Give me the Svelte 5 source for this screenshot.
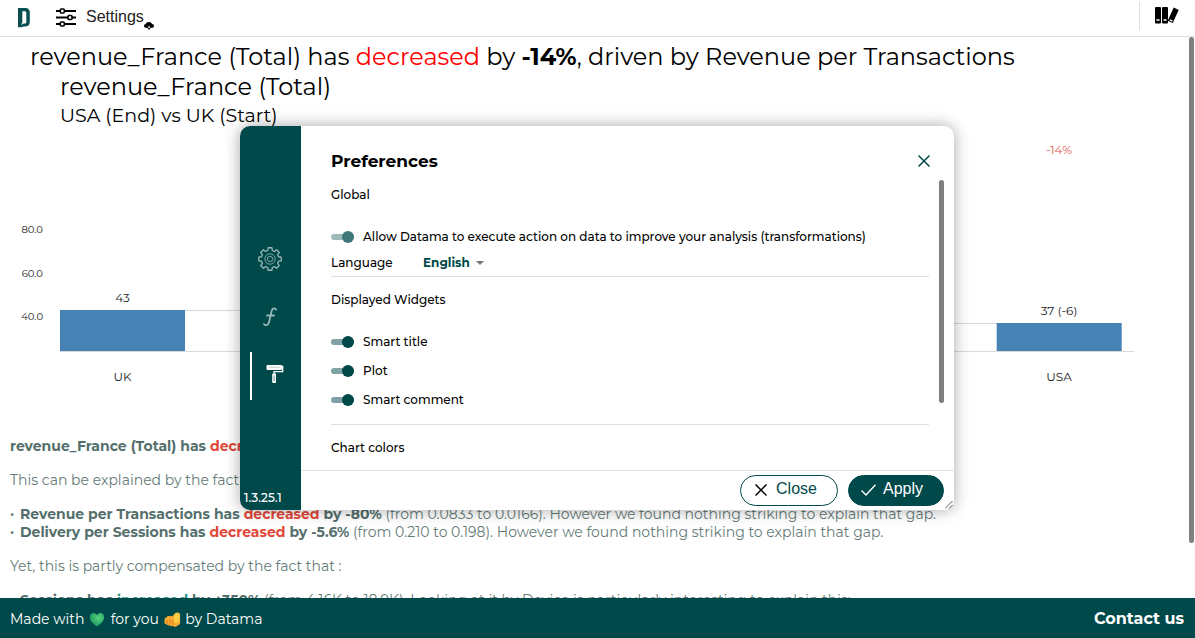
<script>
  const widgets = [
    { id: 'smart-title', label: 'Smart title' },
    { id: 'plot', label: 'Plot' },
    { id: 'smart-comment', label: 'Smart comment' }
  ];
  const teeth = 8;
  function gear(cx, cy, outer, inner) {
    const pts = [];
    for (let i = 0; i < teeth; i++) {
      const base = (i * 2 * Math.PI) / teeth - Math.PI / 2;
      for (const [a, r] of [[-0.26, inner], [-0.17, outer], [0.17, outer], [0.26, inner]]) {
        pts.push(`${(cx + Math.cos(base + a) * r).toFixed(2)} ${(cy + Math.sin(base + a) * r).toFixed(2)}`);
      }
    }
    return `M${pts.join('L')}Z`;
  }
  const gearPath = gear(12, 12, 11.4, 8.8);
</script>

<div class="page">
  <header>
    <a class="logo" href="#home" aria-label="Datama">
      <svg width="12" height="20" viewBox="0 0 12 20">
        <path fill="#0a4f50" fill-rule="evenodd" d="M0 0h7.500c2.800 0 4.300 1.800 4.300 4.500v9.500c0 2.800-1.500 4.300-4.300 4.500H5.500l-2 .7H0zM4.300 3.200v11.300L3 17l2.600-1.500h1.100c1 0 1.600-.6 1.600-1.600V5c0-1.200-.6-1.800-1.800-1.800z" />
      </svg>
    </a>
    <button class="settings" type="button">
      <svg width="20" height="19" viewBox="0 0 20 19" fill="#fff" stroke="#000" stroke-width="1.600">
        <path d="M0 3h20M0 9.500h20M0 16h20" stroke-width="2.200" />
        <rect x="4.300" y="1" width="4" height="4" rx="1" />
        <rect x="12" y="7.500" width="4" height="4" rx="1" />
        <rect x="4.300" y="14" width="4" height="4" rx="1" />
      </svg>
      <span>Settings</span>
      <svg class="cloud" width="10" height="8" viewBox="0 0 10 8">
        <path d="M2.200 5.800C.9 5.800 0 5 0 3.900s.8-1.800 1.700-1.900C2 .8 3.200 0 4.800 0s2.900.8 3.200 2c1.200.1 2 .9 2 1.900 0 1.100-.9 1.900-2.100 1.900H6.800L5 8 3.200 5.800z" />
        <path d="M4.600 3.800h.8v1h.9L5 6.400 3.700 4.800h.9z" fill="#fff" />
      </svg>
    </button>
    <button class="library" type="button" aria-label="Library">
      <svg width="24" height="17" viewBox="0 0 24 17">
        <rect x="0" y="0" width="6" height="16.500" rx="1" />
        <rect x="7" y="0" width="6" height="16.500" rx="1" />
        <path d="M18.700.6l5 2.500-6 13-5-2.400z" />
        <path d="M1.500 13h3M8.500 13h3M14.900 12.900l2.500 1.200" stroke="#fff" stroke-width="1.300" />
      </svg>
    </button>
  </header>

  <main>
    <h1>revenue_France (Total) has <span class="down-title">decreased</span> by <b>-14%</b>, driven by Revenue per Transactions</h1>
    <h2>revenue_France (Total)</h2>
    <h3>USA (End) vs UK (Start)</h3>
    <svg class="chart" viewBox="0 0 1195 307" role="img" aria-label="Revenue by country">
      <g class="axis">
        <text x="43" y="103">80.0</text>
        <text x="43" y="147">60.0</text>
        <text x="43" y="190">40.0</text>
      </g>
      <path d="M185 180.500h405M590 193.500h407M60 221.500h1074" stroke="#d8dada" />
      <rect x="60" y="180" width="125" height="41" fill="#4682b4" />
      <rect x="996.700" y="193" width="125" height="28" fill="#4682b4" />
      <g class="labels">
        <text x="122.500" y="172">43</text>
        <text x="122.500" y="251">UK</text>
        <text x="1059" y="185">37 (-6)</text>
        <text x="1059" y="251">USA</text>
        <text class="drop" x="1059" y="24">-14%</text>
      </g>
    </svg>
    <section class="comment">
      <p><b>revenue_France (Total) has <span class="down">decreased</span> by -14%</b></p>
      <p>This can be explained by the fact that :</p>
      <div>
        <p><i>·</i><b>Revenue per Transactions has <span class="down">decreased</span> by -80%</b> (from 0.0833 to 0.0166). However we found nothing striking to explain that gap.</p>
        <p><i>·</i><b>Delivery per Sessions has <span class="down">decreased</span> by -5.6%</b> (from 0.210 to 0.198). However we found nothing striking to explain that gap.</p>
      </div>
      <p>Yet, this is partly compensated by the fact that :</p>
      <p><i>·</i><b>Sessions has <span class="up">increased</span> by +350%</b> (from 4.16K to 18.9K). Looking at it by Device is particularly interesting to explain this:</p>
    </section>
    <div class="page-thumb"></div>
  </main>

  <footer>
    <span class="made">Made with
      <svg width="19" height="15" viewBox="-1 0 19 15">
        <defs><radialGradient id="heart" cx=".6" cy=".35" r=".7"><stop offset="0" stop-color="#58d37c" /><stop offset="1" stop-color="#16945f" /></radialGradient></defs>
        <path fill="url(#heart)" d="M8 14.500C5 12.300.8 9.300.8 5.200.8 2.500 2.600 1 4.500 1 6.200 1 7.400 2 8 3.300 8.600 2 9.800 1 11.500 1c1.900 0 3.700 1.500 3.700 4.200 0 4.100-4.200 7.100-7.200 9.300z" />
      </svg>
      for you
      <svg width="19" height="15" viewBox="-1 0 19 15">
        <path fill="#f6a832" d="M.5 7.500c0-1.500 1-2.200 2-2.100C3 4 4.800 3.600 5.800 4.300c.8-.9 2.400-.8 3.200 0C9.500 2.200 11.500.3 13.600.5c2 .3 2.800 1.700 2.500 3.600v7.900L12 14.700c-1.500.4-2.700 0-3.300-1-.9.7-2.200.5-2.900-.3-1 .5-2.300.1-2.800-.9-1.500 0-2.500-1-2.500-2.300z" />
        <path fill="#ffcd45" d="M10 6.500C9 3.500 11.500.8 13.600.9c1.700.2 2.400 1.400 2.200 3.200v4.500c-.4 2-3.400 3.200-5.300 2z" />
        <path d="M3 8v4M6 7v6M8.800 8v5" stroke="#d77a22" stroke-width=".8" fill="none" />
      </svg>
      by Datama</span>
    <a href="#contact">Contact us</a>
  </footer>

  <div class="dialog" role="dialog" aria-labelledby="dialog-title">
    <aside>
      <nav>
        <button type="button" aria-label="General">
          <svg class="dim" width="24" height="24" viewBox="0 0 24 24" fill="none" stroke="#fff" stroke-width="1.300" stroke-linejoin="round">
            <path d={gearPath} />
            <circle cx="12" cy="12" r="5.200" stroke-width=".8" />
            <circle cx="12" cy="12" r="2.700" stroke-width=".8" />
          </svg>
        </button>
        <button type="button" aria-label="Formula">
          <svg class="dim" width="16" height="20" viewBox="0 0 16 20" fill="none" stroke="#fff" stroke-width="1.800" stroke-linecap="round">
            <path d="M14 2.600C13.300.9 10.600.6 9.700 3.700L7 15.200c-.8 3.300-4.200 3.600-5 1.900M5 8.500h7" />
          </svg>
        </button>
        <button class="active" type="button" aria-label="Appearance">
          <svg width="18" height="20" viewBox="0 0 18 20">
            <rect x=".5" y="1" width="15.500" height="5" rx="1" fill="#fff" />
            <path d="M15.500 2.500h1.200V7.700H8v3" fill="none" stroke="#fff" stroke-width="1.300" />
            <path d="M2.500 3.200h11" stroke="#a9c2c1" stroke-width=".8" />
            <rect x="6.200" y="9.500" width="3.800" height="9.500" rx="1" fill="#fff" />
            <path d="M8.100 11.500v5.500" stroke="#5d8f8d" />
          </svg>
        </button>
      </nav>
      <span class="version">1.3.25.1</span>
    </aside>
    <div class="panel">
      <div class="top">
        <h4 id="dialog-title">Preferences</h4>
        <button type="button" aria-label="Dismiss">
          <svg width="12" height="12" viewBox="0 0 12 12" stroke="#00494a" stroke-width="1.500"><path d="M.5.5l11 11M11.500.5l-11 11" /></svg>
        </button>
      </div>
      <div class="scroller">
        <section class="global">
          <h5>Global</h5>
          <label class="toggle"><input type="checkbox" checked disabled /><span>Allow Datama to execute action on data to improve your analysis (transformations)</span></label>
          <div class="language">
            <label for="language">Language</label>
            <span class="picker">
              <select id="language"><option>English</option></select>
              <svg width="8" height="4" viewBox="0 0 8 4"><path d="M0 0h8L4 4z" fill="#777" /></svg>
            </span>
          </div>
        </section>
        <section class="widgets">
          <h5>Displayed Widgets</h5>
          {#each widgets as w (w.id)}
            <label class="toggle"><input type="checkbox" name={w.id} checked /><span>{w.label}</span></label>
          {/each}
        </section>
        <section class="colors"><h5>Chart colors</h5></section>
        <div class="thumb"></div>
      </div>
      <div class="actions">
        <button class="close" type="button">
          <svg width="12" height="12" viewBox="0 0 12 12" stroke="#000" stroke-width="1.500"><path d="M.5.5l11 11M11.500.5l-11 11" /></svg>
          <span>Close</span>
        </button>
        <button class="apply" type="button">
          <svg width="15" height="12" viewBox="0 0 15 12" fill="none" stroke="#fff" stroke-width="1.400"><path d="M.5 6.500l4.500 4.500L14.500.8" /></svg>
          <span>Apply</span>
        </button>
      </div>
    </div>
    <svg class="grip" width="8" height="8" viewBox="0 0 8 8" stroke="#555"><path d="M0 7.500L7.500 0M4 7.500L7.500 4" /></svg>
  </div>
</div>

<style>
  :global(body) { margin: 0; background: #fff; }
  .page {
    position: relative;
    display: flex;
    flex-direction: column;
    height: 100vh;
    overflow: hidden;
    font-family: Montserrat, Inter, sans-serif;
    color: #000;
  }
  h1, h2, h3, h4, h5, p { margin: 0; font-weight: 400; }
  button { border: 0; padding: 0; background: none; font: inherit; cursor: pointer; }
  header {
    display: flex;
    align-items: flex-start;
    flex: none;
    height: 36px;
    border-bottom: 1px solid #dedede;
  }
  .logo { padding: 8px 0 0 18px; margin-right: 26px; line-height: 0; }
  .settings {
    display: flex;
    align-items: center;
    height: 34px;
    font-family: "Liberation Sans", Arial, sans-serif;
    font-size: 16px;
    color: #222;
  }
  .settings span { margin-left: 10px; line-height: 32px; }
  .cloud { align-self: flex-end; margin-bottom: 4px; }
  .library {
    display: flex;
    margin: 2px 0 0 auto;
    padding: 5px 16px 0 15px;
    height: 28px;
    border-left: 1px solid #dedede;
  }
  main { position: relative; flex: 1; min-height: 0; overflow: hidden; padding-top: 5px; white-space: nowrap; }
  h1 { padding-left: 30px; font-size: 24px; line-height: 30px; }
  h1 b { font-weight: 700; }
  .down-title { color: #f00; }
  h2 { padding-left: 60px; font-size: 24px; line-height: 30px; }
  h3 { padding-left: 60px; font-size: 19px; line-height: 28px; }
  .chart { display: block; width: 100%; }
  .axis text { font-size: 10px; fill: #222; text-anchor: end; }
  .labels text { font-size: 12px; fill: #222; text-anchor: middle; }
  .labels .drop { fill: #e2574c; }
  .comment {
    display: flex;
    flex-direction: column;
    gap: 16px;
    padding-left: 10px;
    font-size: 14px;
    line-height: 18px;
    color: #647b78;
  }
  .comment b { font-weight: 700; color: #546f6c; }
  .comment i { display: inline-block; width: 10px; font-style: normal; font-weight: 700; }
  .comment .down { color: #e2483a; }
  .comment .up { color: #2e9688; }
  .page-thumb { position: absolute; top: 0; right: 1px; width: 5px; height: 506px; border-radius: 3px; background: #808080; }
  footer {
    display: flex;
    flex: none;
    align-items: center;
    justify-content: space-between;
    height: 40px;
    padding: 0 11px 0 10px;
    background: #00494a;
    color: #fff;
    font-size: 14px;
  }
  .made { padding-top: 2px; }
  .made svg { vertical-align: -3px; }
  footer a { color: #fff; font-size: 16px; font-weight: 700; text-decoration: none; }
  .dialog {
    position: absolute;
    inset: 126px 241px 128px 240px;
    display: flex;
    border-radius: 10px;
    background: #fff;
    box-shadow: 0 0 16px rgba(0, 0, 0, 0.35);
    font-size: 12px;
    font-weight: 500;
  }
  aside {
    display: flex;
    flex-direction: column;
    flex: none;
    width: 61px;
    border-radius: 10px 0 0 10px;
    background: #00494a;
  }
  nav { display: flex; flex-direction: column; gap: 10px; margin-top: 110px; flex: 1; }
  nav button {
    box-sizing: border-box;
    display: flex;
    align-items: center;
    justify-content: center;
    height: 48px;
    margin-left: 10px;
    padding: 0 13px 2px 0;
    border-left: 2px solid transparent;
  }
  nav .active { border-color: #fff; padding: 0 4px 4px 0; }
  .dim { opacity: 0.6; }
  .version { padding: 0 0 4px 4px; line-height: 16px; color: #fff; }
  .panel { display: flex; flex-direction: column; flex: 1; min-width: 0; }
  .top { display: flex; align-items: center; justify-content: space-between; flex: none; height: 38px; padding: 16px 24px 0 30px; }
  h4 { font-size: 17px; font-weight: 700; }
  .top button { line-height: 0; }
  .scroller { position: relative; flex: 1; min-height: 0; overflow: hidden; padding: 0 25px 0 30px; }
  h5 { font-size: 12px; line-height: 30px; font-weight: 500; }
  .scroller section { border-bottom: 1px solid #dedede; }
  .scroller .colors { border: 0; padding-top: 8px; }
  .global .toggle { margin-top: 12px; }
  .toggle { display: flex; align-items: center; gap: 9px; height: 29px; }
  .toggle input {
    appearance: none;
    flex: none;
    display: flex;
    align-items: center;
    justify-content: flex-end;
    width: 23px;
    height: 6px;
    margin: 0;
    border-radius: 3px;
    background: #7fa3a4;
  }
  .toggle input::before { content: ""; width: 12px; height: 12px; border-radius: 50%; background: #00494a; }
  .toggle input:disabled { opacity: 0.75; }
  .language { display: flex; align-items: center; height: 23px; padding-bottom: 2px; }
  .language label { width: 92px; }
  .picker { display: flex; align-items: center; gap: 6px; }
  select { appearance: none; border: 0; padding: 0; background: none; font: inherit; font-weight: 700; color: #00494a; }
  .widgets { padding: 8px 0 10px; }
  .widgets h5 { margin-bottom: 12px; }
  .thumb { position: absolute; top: 0; right: 10px; width: 5px; height: 223px; border-radius: 3px; background: #808080; }
  .actions {
    display: flex;
    align-items: center;
    justify-content: flex-end;
    gap: 10px;
    flex: none;
    height: 38px;
    padding: 0 10px 1px 0;
    border-top: 1px solid #e2e2e2;
  }
  .actions button {
    box-sizing: border-box;
    display: flex;
    align-items: center;
    gap: 7px;
    min-width: 96px;
    height: 31px;
    padding: 0 20px 0 12px;
    border: 1px solid #00494a;
    border-radius: 16px;
    font-family: "Liberation Sans", Arial, sans-serif;
    font-size: 16px;
    font-weight: 400;
    color: #00494a;
  }
  .actions .close { gap: 9px; padding-left: 14px; }
  .actions span { padding-bottom: 2px; }
  .actions .apply { background: #00494a; color: #fff; }
  .grip { position: absolute; right: 1px; bottom: 1px; }
</style>
